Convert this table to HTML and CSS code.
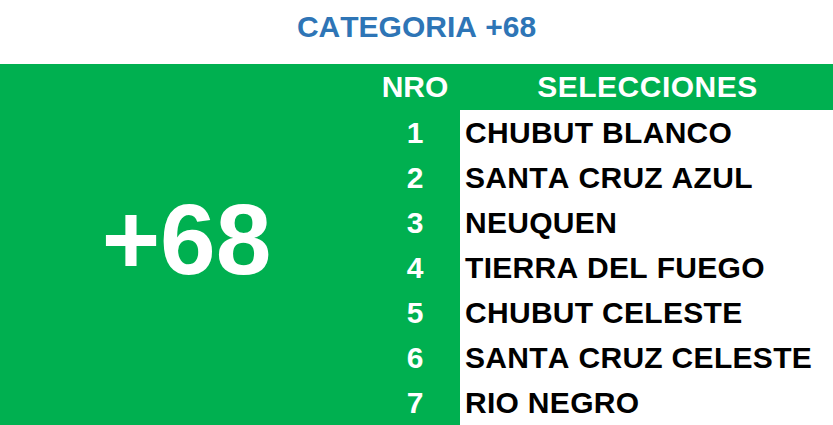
FILE: index.html
```html
<!DOCTYPE html>
<html lang="es">
<head>
<meta charset="utf-8">
<title>CATEGORIA +68</title>
<link rel="stylesheet" href="styles.css">
</head>
<body>
  <h1 class="title">CATEGORIA +68</h1>
  <div class="table">
    <div class="cat">+68</div>
    <div class="head nro-head">NRO</div>
    <div class="head sel-head">SELECCIONES</div>
    <div class="nro">1</div><div class="name">CHUBUT BLANCO</div>
    <div class="nro">2</div><div class="name">SANTA CRUZ AZUL</div>
    <div class="nro">3</div><div class="name">NEUQUEN</div>
    <div class="nro">4</div><div class="name">TIERRA DEL FUEGO</div>
    <div class="nro">5</div><div class="name">CHUBUT CELESTE</div>
    <div class="nro">6</div><div class="name">SANTA CRUZ CELESTE</div>
    <div class="nro">7</div><div class="name">RIO NEGRO</div>
  </div>
</body>
</html>
```
FILE: styles.css
```css
html, body {
  margin: 0;
  padding: 0;
  background: #ffffff;
  font-family: "Liberation Sans", Arial, sans-serif;
  font-weight: bold;
  font-kerning: none;
}

.title {
  margin: 0;
  height: 34px;
  padding: 10px 0 20px;
  line-height: 34px;
  font-size: 30px;
  font-weight: bold;
  color: #2e75b6;
  text-align: center;
}

.table {
  display: grid;
  grid-template-columns: 370px 90px 1fr;
  grid-template-rows: 46px repeat(7, 45px);
  background: #00b050;
  width: 833px;
}

.cat {
  grid-column: 1;
  grid-row: 1 / span 8;
  display: flex;
  align-items: center;
  justify-content: center;
  padding-bottom: 12px;
  padding-left: 3px;
  font-size: 100px;
  color: #ffffff;
  line-height: 1;
}

.head {
  color: #ffffff;
  font-size: 30px;
  line-height: 46px;
  text-align: center;
}

.sel-head {
  letter-spacing: 0.5px;
  padding-left: 2px;
}

.nro {
  grid-column: 2;
  color: #ffffff;
  font-size: 30px;
  line-height: 45px;
  text-align: center;
}

.name {
  grid-column: 3;
  background: #ffffff;
  color: #000000;
  font-size: 30px;
  line-height: 45px;
  padding-left: 5px;
  letter-spacing: 0.3px;
  white-space: nowrap;
}
```
